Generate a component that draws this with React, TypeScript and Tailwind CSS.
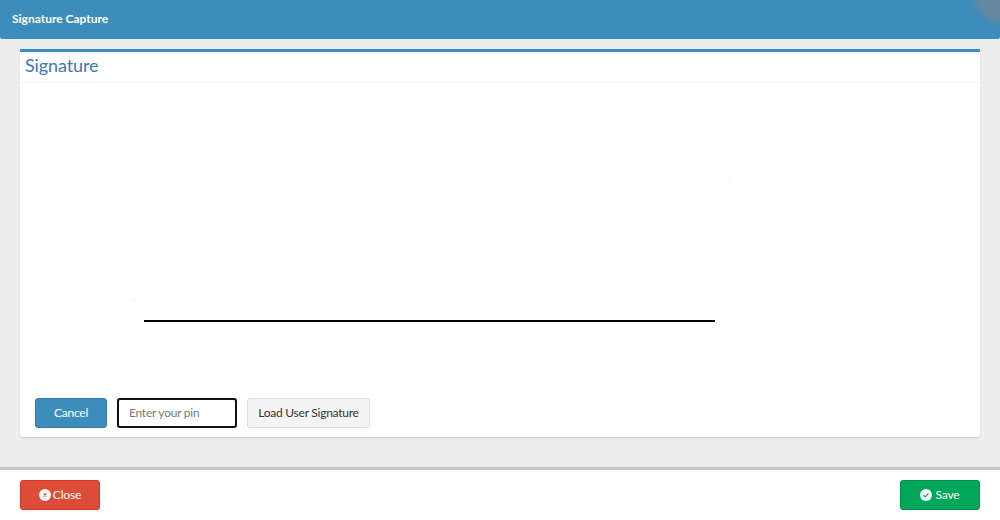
import React from "react";

const CircleX = () => (
  <svg viewBox="0 0 12 12" className="w-3 h-3 mr-[2px]">
    <circle cx="6" cy="6" r="6" fill="#fff" />
    <path d="M4.5 4.5l3 3M7.5 4.5l-3 3" stroke="#dd4b39" strokeWidth="1.1" fill="none" />
  </svg>
);

const CircleCheck = () => (
  <svg viewBox="0 0 12 12" className="w-3 h-3 mr-[3px]">
    <circle cx="6" cy="6" r="6" fill="#fff" />
    <path d="M3.6 6.2l1.7 1.6 3.1-3.3" stroke="#00a65a" strokeWidth="1.2" fill="none" />
  </svg>
);

const App = () => {
  return (
    <div className="w-[1000px] h-[520px] flex flex-col overflow-hidden bg-white font-['Lato','Noto_Sans',sans-serif] text-[12px]">
      <header className="relative h-[39px] shrink-0 overflow-hidden rounded-b-[2px] bg-[#3c8dbc] pl-3 pb-[1px] flex items-center">
        <h1 className="text-[12px] font-bold text-white">Signature Capture</h1>
        <div className="absolute right-[-37px] top-[-40px] h-[64px] w-[64px] rounded-full bg-[#64899f] blur-[3px]" />
      </header>

      <main className="flex-1 bg-[#ededed] px-5 pt-[10px]">
        <section className="h-[388px] flex flex-col rounded-b-[3px] border-t-[3px] border-[#3c8dbc] bg-white shadow-[0_1px_1px_rgba(0,0,0,0.15)]">
          <div className="h-[31px] shrink-0 border-b border-[#f4f4f4] pl-[5px] pb-[4px] flex items-center">
            <h2 className="text-[18px] text-[#3f78b4] tracking-[-0.1px]">Signature</h2>
          </div>

          <div className="relative flex-1 pl-[124px] pt-[237px]">
            <div className="h-[2px] w-[571px] bg-black" />
            {/* faint smudges left on the signature canvas */}
            <div className="absolute left-[110px] top-[216px] h-[3px] w-[6px] bg-[#fafafa]" />
            <div className="absolute left-[709px] top-[88px] h-[12px] w-[1px] bg-[#fafafa]" />
          </div>

          <div className="flex items-center gap-[10px] pl-[15px] pb-[9px] tracking-[-0.25px]">
            <button className="h-[30px] w-[72px] rounded-[3px] border border-[#367fa9] bg-[#3c8dbc] text-white">
              Cancel
            </button>
            <input
              placeholder="Enter your pin"
              className="h-[30px] w-[120px] rounded-[3px] border-2 border-[#111] bg-white px-[10px] pb-[2px] placeholder:text-[#777] outline-none"
            />
            <button className="h-[30px] w-[123px] rounded-[3px] border border-[#ddd] bg-[#f4f4f4] text-[#333]">
              Load User Signature
            </button>
          </div>
        </section>
      </main>

      <footer className="h-[53px] shrink-0 border-t-[3px] border-[#c6c6c6] bg-white px-5 pt-[10px] flex items-start justify-between tracking-[-0.15px]">
        <button className="h-[30px] w-[80px] flex items-center justify-center rounded-[3px] border border-[#d73925] bg-[#dd4b39] text-white">
          <CircleX />
          Close
        </button>
        <button className="h-[30px] w-[80px] flex items-center justify-center rounded-[3px] border border-[#008d4c] bg-[#00a65a] text-white">
          <CircleCheck />
          Save
        </button>
      </footer>
    </div>
  );
};

export default App;
